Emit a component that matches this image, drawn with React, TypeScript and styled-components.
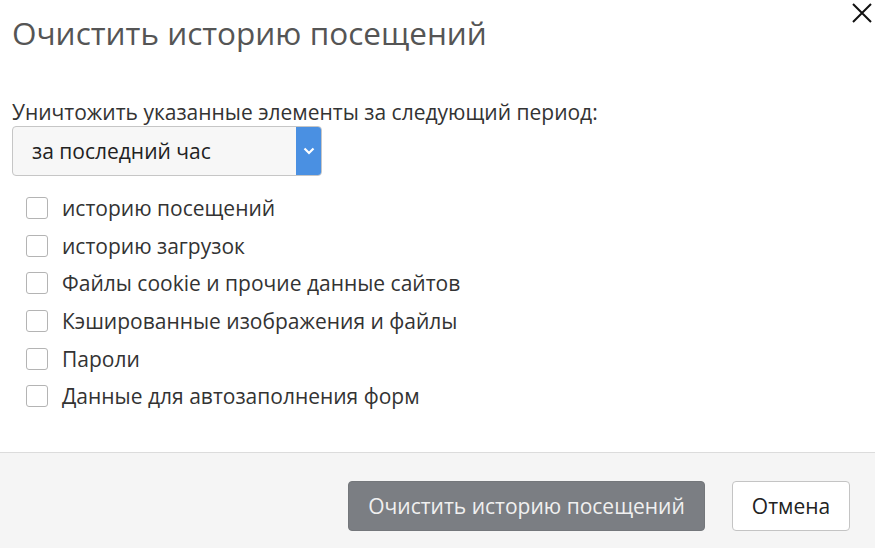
import React from "react";
import styled, { createGlobalStyle } from "styled-components";

const Global = createGlobalStyle`
  html, body { margin: 0; padding: 0; background: #fff; }
  body { font-family: "Open Sans", "Noto Sans", sans-serif; }
  * { box-sizing: border-box; }
`;

const Dialog = styled.div`
  width: 875px;
  height: 548px;
  display: flex;
  flex-direction: column;
  position: relative;
  background: #fff;
  overflow: hidden;
`;

const Body = styled.div`
  flex: 1;
  padding: 0 12px;
  display: flex;
  flex-direction: column;
`;

const Title = styled.h1`
  margin: 11px 0 0 0;
  font-size: 31.5px;
  line-height: 44px;
  font-weight: 400;
  color: #555;
`;

const CloseButton = styled.button`
  position: absolute;
  top: 2px;
  right: 2px;
  width: 22px;
  height: 22px;
  padding: 0;
  border: none;
  background: transparent;
  display: flex;
  align-items: center;
  justify-content: center;
`;

const Label = styled.div`
  margin-top: 44px;
  font-size: 21px;
  line-height: 26px;
  color: #333;
`;

const Select = styled.div`
  margin-top: 1px;
  width: 310px;
  height: 50px;
  border: 1px solid #c6c6c6;
  border-radius: 4px;
  background: #f7f7f7;
  display: flex;
  overflow: hidden;
`;

const SelectValue = styled.div`
  flex: 1;
  padding-left: 19px;
  display: flex;
  align-items: center;
  font-size: 21px;
  color: #222;
`;

const SelectArrow = styled.div`
  width: 25px;
  background: #4a90e2;
  display: flex;
  align-items: center;
  justify-content: center;
`;

const List = styled.div`
  margin-top: 13px;
  display: flex;
  flex-direction: column;
`;

const Row = styled.label`
  height: 37.7px;
  display: flex;
  align-items: center;
  padding-left: 14px;
  font-size: 21px;
  color: #333;
`;

const Box = styled.span`
  width: 22px;
  height: 22px;
  border: 1px solid #b4b4b4;
  border-radius: 3px;
  background: #fff;
  margin-right: 14px;
  flex: none;
`;

const Footer = styled.div`
  height: 96px;
  border-top: 1px solid #dcdcdc;
  background: #f5f5f5;
  display: flex;
  justify-content: flex-end;
  align-items: flex-start;
  padding: 28px 25px 0 0;
  gap: 27px;
`;

const Button = styled.button<{ $primary?: boolean }>`
  height: 50px;
  padding: 0;
  width: ${(p) => (p.$primary ? "357px" : "118px")};
  border-radius: 4px;
  font-family: "Open Sans", "Noto Sans", sans-serif;
  font-size: 21px;
  border: 1px solid ${(p) => (p.$primary ? "#74777b" : "#c4c4c4")};
  background: ${(p) => (p.$primary ? "#7b7e83" : "#fff")};
  color: ${(p) => (p.$primary ? "#f0f0f0" : "#222")};
`;

const items = [
  "историю посещений",
  "историю загрузок",
  "Файлы cookie и прочие данные сайтов",
  "Кэшированные изображения и файлы",
  "Пароли",
  "Данные для автозаполнения форм",
];

export default function App() {
  return (
    <>
      <Global />
      <Dialog>
        <CloseButton aria-label="close">
          <svg width="20" height="20" viewBox="0 0 20 20">
            <path d="M1 1 L19 19 M19 1 L1 19" stroke="#111" strokeWidth="2" />
          </svg>
        </CloseButton>
        <Body>
          <Title>Очистить историю посещений</Title>
          <Label>Уничтожить указанные элементы за следующий период:</Label>
          <Select>
            <SelectValue>за последний час</SelectValue>
            <SelectArrow>
              <svg width="12" height="8" viewBox="0 0 12 8">
                <path d="M1.5 1.5 L6 6 L10.5 1.5" stroke="#fff" strokeWidth="2.2" fill="none" />
              </svg>
            </SelectArrow>
          </Select>
          <List>
            {items.map((t) => (
              <Row key={t}>
                <Box />
                {t}
              </Row>
            ))}
          </List>
        </Body>
        <Footer>
          <Button $primary>Очистить историю посещений</Button>
          <Button>Отмена</Button>
        </Footer>
      </Dialog>
    </>
  );
}
